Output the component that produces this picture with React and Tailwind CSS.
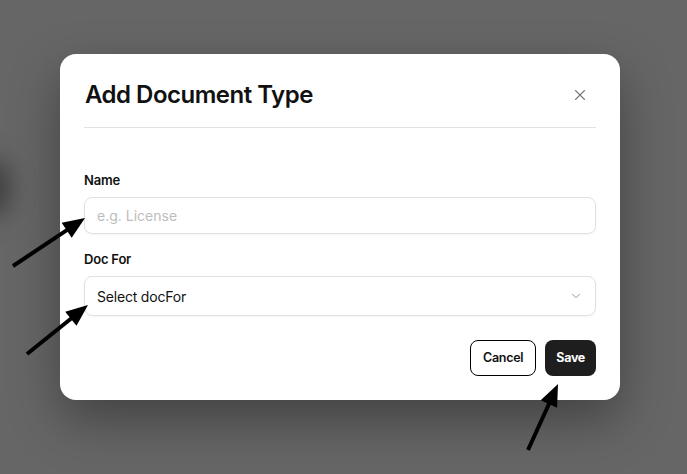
import { X, ChevronDown } from "lucide-react";

function Arrow({ x1, y1, x2, y2 }) {
  // tail (x1,y1) -> tip (x2,y2)
  const dx = x2 - x1;
  const dy = y2 - y1;
  const len = Math.hypot(dx, dy);
  const ux = dx / len;
  const uy = dy / len;
  const hl = 22;
  const hw = 9;
  const bx = x2 - ux * hl;
  const by = y2 - uy * hl;
  const pts = [
    `${x2},${y2}`,
    `${bx - uy * hw},${by + ux * hw}`,
    `${bx + uy * hw},${by - ux * hw}`,
  ].join(" ");
  return (
    <g>
      <line x1={x1} y1={y1} x2={bx + ux * 2} y2={by + uy * 2} stroke="#000" strokeWidth="4" />
      <polygon points={pts} fill="#000" />
    </g>
  );
}

export default function App() {
  return (
    <div
      className="relative w-full min-h-screen h-[474px] overflow-hidden bg-[#666666] flex items-start justify-start pl-[60px] pt-[54px]"
      style={{ fontFamily: "Inter, 'Noto Sans', sans-serif" }}
    >
      {/* blurred background page */}
      <div className="absolute -left-6 top-[160px] w-8 h-14 rounded-full bg-[#3a3a3a] blur-md" />

      <div className="relative w-[560px] bg-white rounded-2xl px-6 pt-6 pb-6 shadow-[0_20px_50px_rgba(0,0,0,0.35)]">
        <div className="flex items-center justify-between h-[34px] pl-px">
          <h2 className="text-[24px] font-semibold text-[#111] tracking-[-0.5px]">Add Document Type</h2>
          <button className="mr-[7px] text-[#777]">
            <X size={18} strokeWidth={1.5} />
          </button>
        </div>
        <div className="mt-[15px] h-px bg-[#e2e2e2]" />

        <div className="mt-[44px]">
          <label className="block text-[13px] font-semibold text-[#111] leading-4 tracking-[-0.2px]">Name</label>
          <input
            className="mt-[9px] w-full h-[37px] rounded-lg border border-[#e0e0e0] px-3 text-[14px] text-[#111] placeholder:text-[#bdbdbd] outline-none shadow-[0_1px_2px_rgba(0,0,0,0.04)]"
            placeholder="e.g. License"
          />
        </div>

        <div className="mt-[17px]">
          <label className="block text-[13px] font-semibold text-[#111] leading-4 tracking-[-0.2px]">Doc For</label>
          <div className="mt-[9px] w-full h-[40px] rounded-lg border border-[#e0e0e0] px-3 flex items-center justify-between text-[14px] text-[#111] tracking-[-0.2px] shadow-[0_1px_2px_rgba(0,0,0,0.04)]">
            <span>Select docFor</span>
            <ChevronDown size={14} strokeWidth={1.5} className="text-[#888] mr-0" />
          </div>
        </div>

        <div className="mt-[24px] flex justify-end gap-[9px]">
          <button className="h-[36px] px-[12px] rounded-lg border border-black bg-white text-[12.5px] font-semibold text-[#111] tracking-[-0.3px]">
            Cancel
          </button>
          <button className="h-[36px] px-[11px] rounded-lg bg-[#1e1e1f] text-[12.5px] font-bold text-white tracking-[-0.3px]">
            Save
          </button>
        </div>
      </div>

      <svg className="absolute inset-0 pointer-events-none" width="687" height="474">
        <Arrow x1={13} y1={266} x2={85} y2={218} />
        <Arrow x1={27} y1={354} x2={88} y2={305} />
        <Arrow x1={528} y1={450} x2={558} y2={384} />
      </svg>
    </div>
  );
}
